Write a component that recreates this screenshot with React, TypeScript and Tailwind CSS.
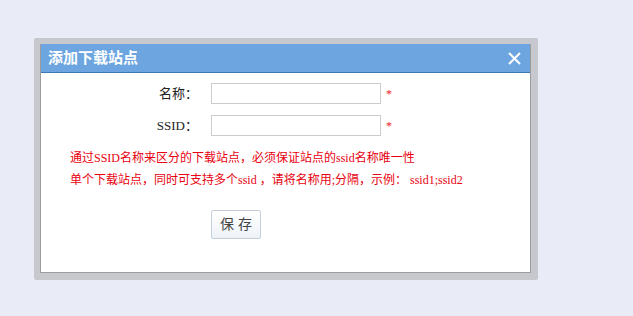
import React from 'react';

const FONT = { fontFamily: '"Liberation Serif", "Noto Sans CJK SC", serif' };

const Field: React.FC<{ label: string }> = ({ label }) => (
  <div className="flex items-center">
    <label className="w-[157px] text-right text-[13px] text-[#222] leading-[21px]">{label}</label>
    <input className="ml-[13px] w-[170px] h-[21px] border border-[#cccccc] bg-white outline-none" />
    <span className="ml-[5px] text-[12px] text-[#e8202a] leading-none">*</span>
  </div>
);

export default function App() {
  return (
    <div className="w-[633px] h-[316px] bg-[#e9ecf6] overflow-hidden" style={FONT}>
      <div className="ml-[34px] mt-[38px] w-[504px] h-[242px] bg-[#c6c8ce] pl-[6px] pt-[6px] pr-[7px] pb-[7px] rounded-[2px]">
        <div className="h-full bg-white border border-[#9c9c9c] border-t-0 flex flex-col">
          <div className="h-[29px] bg-[#6ca5df] border-b border-[#3d78b4] flex items-center justify-between pl-[7px] pr-[9px]">
            <span className="text-white font-bold text-[15px] leading-none">添加下载站点</span>
            <svg width="13" height="13" viewBox="0 0 13 13">
              <path d="M1 1L12 12M12 1L1 12" stroke="#ffffff" strokeWidth="2" />
            </svg>
          </div>

          <div className="mt-[10px] flex flex-col gap-[11px]">
            <Field label="名称：" />
            <Field label="SSID：" />
          </div>

          <div className="mt-[11px] pl-[29px] text-[12px] leading-[22px] text-[#e8000e]">
            <p>通过SSID名称来区分的下载站点，必须保证站点的ssid名称唯一性</p>
            <p>单个下载站点，同时可支持多个ssid ，请将名称用;分隔，示例： ssid1;ssid2</p>
          </div>

          <div className="mt-[19px] pl-[170px]">
            <button className="w-[50px] h-[29px] pl-[4px] border border-[#c5cedb] rounded-[2px] bg-gradient-to-b from-white to-[#eef2f8] text-[14px] text-[#444] tracking-[4px]">
              保存
            </button>
          </div>
        </div>
      </div>
    </div>
  );
}
